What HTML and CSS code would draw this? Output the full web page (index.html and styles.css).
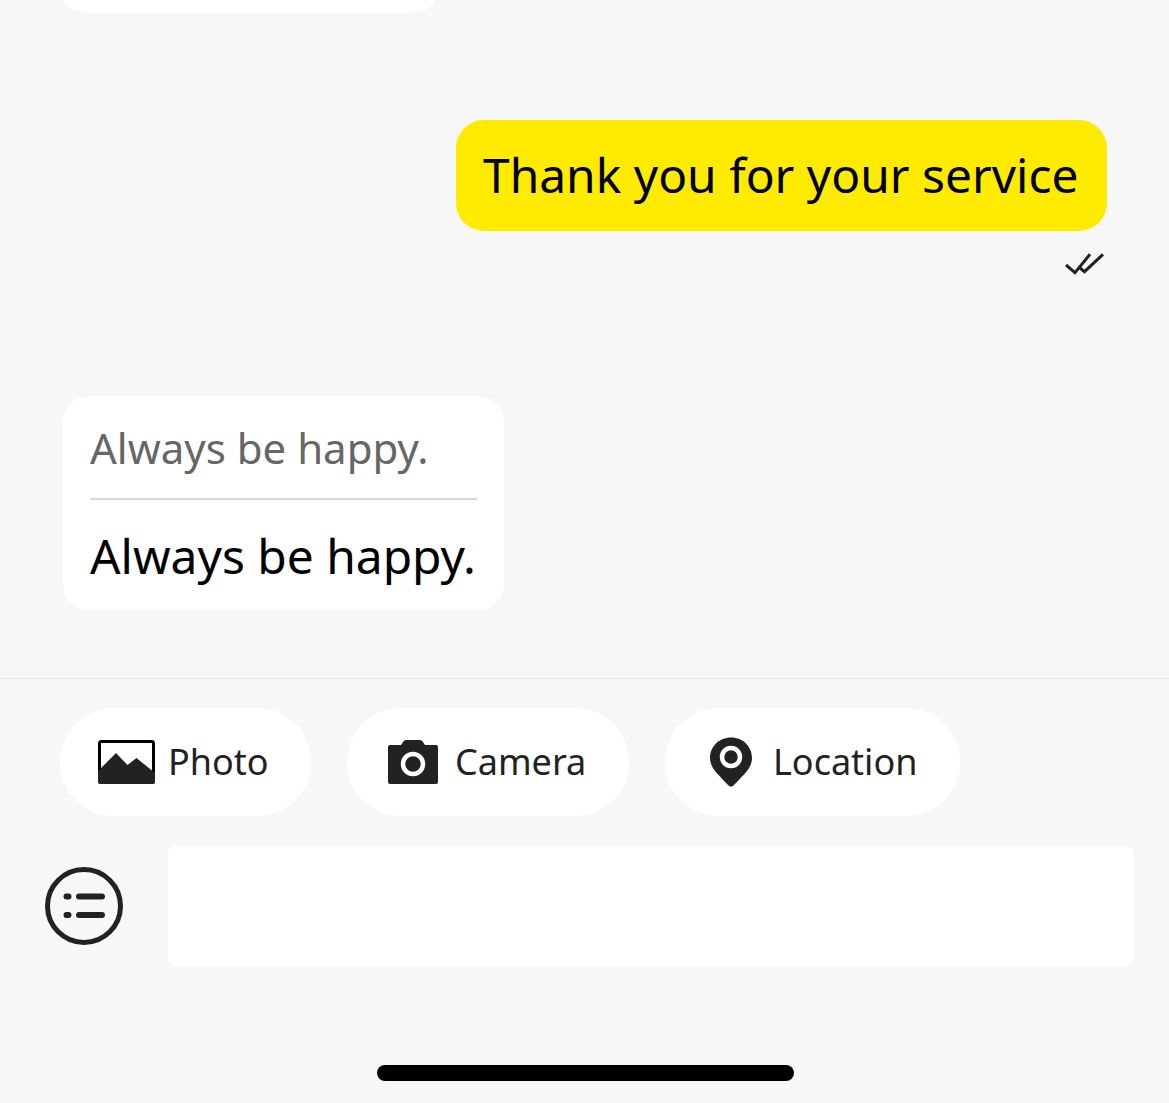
FILE: index.html
```html
<!DOCTYPE html>
<html lang="en">
<head>
<meta charset="utf-8">
<title>Chat</title>
<link rel="stylesheet" href="styles.css">
</head>
<body>
<div class="screen">
  <main class="messages">
    <div class="stub"></div>
    <div class="sent-row">
      <div class="bubble-sent">Thank you for your service</div>
      <svg class="ticks" width="40" height="24" viewBox="0 0 40 24" fill="none" stroke="#222" stroke-width="3"><path d="M1 13 10 20.700 25 2.300"/><path d="M15 16 19.500 19.700 38 2.300"/></svg>
    </div>
    <div class="bubble-received">
      <div class="original">Always be happy.</div>
      <div class="translated">Always be happy.</div>
    </div>
  </main>
  <section class="composer">
    <div class="chips">
      <div class="chip chip-photo">
        <svg width="57" height="44" viewBox="0 0 57 44"><rect x="1.500" y="1.500" width="54" height="41" rx="2" fill="#fff" stroke="#000" stroke-width="3"/><path d="M0 31 18 13l11.500 12 9-7 18.500 15v9a2 2 0 0 1-2 2H2a2 2 0 0 1-2-2z" fill="#222"/></svg>
        <span>Photo</span>
      </div>
      <div class="chip chip-camera">
        <svg width="50" height="44" viewBox="0 0 50 44"><path d="M2 5h11l2-3q1-2 3-2h14q2 0 3 2l2 3h11q2 0 2 2v35q0 2-2 2H2q-2 0-2-2V7q0-2 2-2z" fill="#222"/><circle cx="25" cy="24" r="10" fill="none" stroke="#fff" stroke-width="4.500"/></svg>
        <span>Camera</span>
      </div>
      <div class="chip chip-location">
        <svg width="44" height="50" viewBox="0 0 44 50"><path d="M22 .5C10 .5 1 9.500 1 21c0 6 3 11 7 15.500 4 4 8 8.500 11.500 12 1.500 1.500 3.500 1.500 5 0 3.500-3.500 7.500-8 11.500-12C40 32 43 27 43 21 43 9.500 34 .5 22 .5z" fill="#222"/><circle cx="22" cy="20" r="9" fill="#222" stroke="#fff" stroke-width="4.500"/></svg>
        <span>Location</span>
      </div>
    </div>
    <div class="input-row">
      <svg class="menu-icon" width="78" height="78" viewBox="0 0 78 78" fill="none" stroke="#222"><circle cx="39" cy="39" r="36.500" stroke-width="5"/><path d="M21.500 29.500h2M21.500 48h2M34 29.500h23M34 48h23" stroke-width="6" stroke-linecap="round"/></svg>
      <div class="text-input"></div>
    </div>
  </section>
  <div class="home-bar"></div>
</div>
</body>
</html>
```

FILE: styles.css
```css
* { box-sizing: border-box; }
html, body { margin: 0; padding: 0; }
body {
  background: #f7f7f7;
  font-family: "Noto Sans", "Open Sans", sans-serif;
  color: #000;
}
.screen {
  width: 1169px;
  height: 1103px;
  overflow: hidden;
  display: flex;
  flex-direction: column;
}
.messages {
  height: 679px;
  padding: 0 62px 0 63px;
  border-bottom: 1px solid #e4e4e4;
  display: flex;
  flex-direction: column;
  flex: none;
}
.stub {
  width: 370px;
  height: 13px;
  margin-left: 1px;
  background: #fff;
  border-radius: 0 0 26px 26px / 0 0 13px 13px;
}
.sent-row {
  margin-top: 107px;
  display: flex;
  flex-direction: column;
  align-items: flex-end;
}
.bubble-sent {
  height: 111px;
  width: 651px;
  border-radius: 28px;
  background: #ffeb00;
  padding-left: 27px;
  font-size: 47.9px;
  line-height: 110px;
  color: #000;
  white-space: nowrap;
}
.ticks { margin: 21px 2px 0 0; display: block; }
.bubble-received {
  margin-top: 120px;
  width: 441px;
  height: 214px;
  background: #fff;
  border-radius: 26px;
  padding: 0 27px;
}
.original {
  height: 104px;
  line-height: 103px;
  font-size: 42px;
  color: #666;
  border-bottom: 2px solid #d8d8d8;
  white-space: nowrap;
}
.translated {
  line-height: 112px;
  font-size: 47.9px;
  color: #000;
  white-space: nowrap;
}
.composer { padding: 29px 35px 0 45px; }
.chips {
  display: flex;
  gap: 36px;
  margin-left: 15px;
}
.chip {
  height: 108px;
  border-radius: 54px;
  background: #fff;
  display: flex;
  align-items: center;
  font-size: 36px;
  line-height: 106px;
  color: #222;
}
.chip-photo { width: 251px; padding-left: 38px; gap: 13px; }
.chip-camera { width: 282px; padding-left: 41px; gap: 17px; }
.chip-location { width: 295px; padding-left: 44px; gap: 20px; }
.chip svg { flex: none; margin-bottom: 1px; }
.input-row {
  margin-top: 30px;
  display: flex;
  align-items: center;
  gap: 45px;
}
.menu-icon { display: block; flex: none; }
.text-input {
  height: 120px;
  flex: 1;
  background: #fff;
  border-radius: 8px;
}
.home-bar {
  width: 417px;
  height: 16px;
  margin: 99px 0 0 377px;
  background: #000;
  border-radius: 8px;
}
```
